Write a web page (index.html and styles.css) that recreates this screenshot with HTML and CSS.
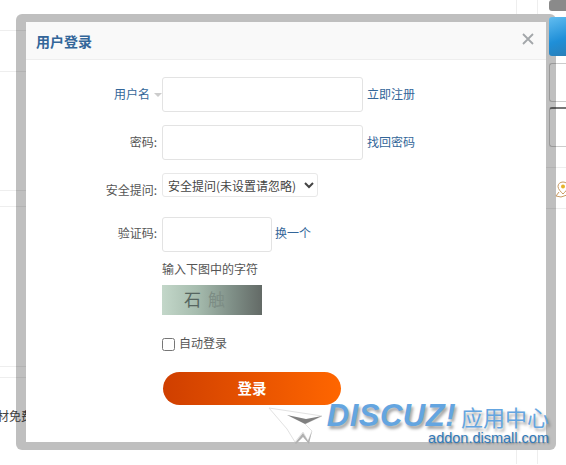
FILE: index.html
```html
<!DOCTYPE html>
<html lang="zh-CN">

<head>
    <meta charset="utf-8">
    <meta name="viewport" content="width=device-width, initial-scale=1.0">
    <title>用户登录</title>
    <link rel="stylesheet" href="styles.css">
</head>

<body>
    <!--页面背景-->
    <div class="backdrop">
        <i class="line l1"></i>
        <i class="line l2"></i>
        <i class="line l3"></i>
        <i class="line l4"></i>
        <i class="line l5"></i>
        <i class="line l6"></i>
        <i class="line-r r1"></i>
        <i class="line-r r2"></i>
        <i class="vline v1"></i>
        <i class="vline v2"></i>
        <i class="vline v3"></i>
        <i class="vline v4"></i>
        <span class="cut-text">材免费</span>
        <div class="side-top"></div>
        <div class="side-blue"></div>
        <div class="side-box b1"></div>
        <div class="side-box b2"></div>
        <svg class="side-pin" width="14" height="20" viewBox="0 0 14 20">
            <path d="M8 2c-3 0-5 2-5 4.500 0 2.500 3 5.500 5 7.500 2-2 5-5 5-7.500C13 4 11 2 8 2z" fill="#fff" stroke="#c99a62" stroke-width="1" />
            <circle cx="8" cy="6.500" r="2" fill="#e5b32c" />
            <path d="M4 12l-3 4 5 1 6-2" fill="none" stroke="#c99a62" stroke-width="1" />
        </svg>
    </div>

    <!--登录窗口-->
    <div class="dialog">
        <div class="dialog-head">
            <h3>用户登录</h3>
            <svg class="close" width="12" height="12" viewBox="0 0 12 12">
                <path d="M1 1l10 10M11 1L1 11" stroke="#a3a7aa" stroke-width="1.800" fill="none" />
            </svg>
        </div>

        <form class="login">
            <div class="row">
                <label class="name-label">用户名<b class="caret"></b></label>
                <input class="txt" type="text">
                <a href="#">立即注册</a>
            </div>
            <div class="row">
                <label>密码:</label>
                <input class="txt" type="password">
                <a href="#">找回密码</a>
            </div>
            <div class="row row-select">
                <label>安全提问:</label>
                <select class="question">
                    <option>安全提问(未设置请忽略)</option>
                </select>
            </div>
            <div class="row row-code">
                <label>验证码:</label>
                <input class="txt short" type="text">
                <a href="#">换一个</a>
            </div>
            <div class="code-box">
                <p>输入下图中的字符</p>
                <div class="code-img"><span>石</span><span class="pale">触</span></div>
                <label class="auto"><input type="checkbox"><span>自动登录</span></label>
                <button class="submit" type="button">登录</button>
            </div>
        </form>
    </div>

    <!--水印-->
    <div class="mark">
        <svg class="mark-arrow" width="56" height="40" viewBox="0 0 56 40">
            <path d="M1 1l53 8-17 8 7 7-4 10-5-9-8 10-8-13z" fill="#fff" stroke="#e2e2e2" stroke-width="1" />
            <path d="M19 8l18 9 17-8-16 3z" fill="#808080" />
            <path d="M27 36l8-10 5 8 4-10-3 13-6-7-7 7z" fill="#b0b0b0" />
        </svg>
        <div class="mark-top"><span class="mark-logo">DISCUZ!</span><span class="mark-cn">应用中心</span></div>
        <div class="mark-url">addon.dismall.com</div>
    </div>
</body>

</html>
```

FILE: styles.css
```css
body {
    margin: 0;
    width: 566px;
    height: 465px;
    overflow: hidden;
    background-color: white;
    font-family: "Noto Sans CJK SC", "Liberation Sans", sans-serif;
    font-size: 12px;
    color: #555;
}

/* BACKDROP */

.backdrop .line {
    position: absolute;
    left: 0;
    width: 26px;
    height: 1px;
    background-color: #eee;
}

.l1 { top: 30px; }
.l2 { top: 71px; }
.l3 { top: 190px; }
.l4 { top: 206px; }
.l5 { top: 366px; }
.l6 { top: 377px; }

.line-r {
    position: absolute;
    left: 546px;
    width: 20px;
    height: 1px;
    background-color: #eee;
}

.r1 { top: 167px; }
.r2 { top: 208px; }

.vline {
    position: absolute;
    width: 1px;
    height: 14px;
    background-color: #eee;
}

.v1 { left: 516px; top: 0; }
.v2 { left: 537px; top: 0; }
.v3 { left: 516px; top: 450px; }
.v4 { left: 537px; top: 450px; }

.cut-text {
    position: absolute;
    left: -3px;
    top: 407px;
    width: 30px;
    overflow: hidden;
    white-space: nowrap;
    color: #444;
}

.side-top {
    position: absolute;
    left: 549px;
    top: 0;
    width: 17px;
    height: 11px;
    background-color: #8a8a8a;
    border-radius: 3px 0 0 3px;
}

.side-blue {
    position: absolute;
    z-index: 1;
    left: 549px;
    top: 17px;
    width: 17px;
    height: 39px;
    border-radius: 3px 0 0 3px;
    background: linear-gradient(160deg, #62bdf0, #1f8fd8 60%, #2a7fb8);
}

.side-box {
    position: absolute;
    left: 549px;
    width: 17px;
    border: 1px solid #ccc;
    border-right: none;
    border-radius: 3px 0 0 3px;
    background-color: white;
}

.b1 { top: 63px; height: 37px; }
.b2 { top: 107px; height: 37px; border-top: 2px solid #777; }

.side-pin {
    position: absolute;
    left: 555px;
    top: 180px;
}

/* DIALOG */

.dialog {
    position: absolute;
    left: 16px;
    top: 14px;
    width: 520px;
    height: 420px;
    border-style: solid;
    border-color: rgba(0, 0, 0, .25);
    border-width: 8px 10px;
    border-radius: 6px;
    background-color: white;
    background-clip: padding-box;
}

.dialog-head {
    height: 34px;
    display: flex;
    align-items: center;
    justify-content: space-between;
    padding: 0 12px 3px 10px;
    background-color: #f9f9f9;
    border-bottom: 1px solid #eee;
}

h3 {
    margin: 0;
    padding-top: 3px;
    font-size: 14px;
    font-weight: bold;
    color: #336699;
}

/* FORM */

.login {
    padding: 17px 0 0 136px;
}

.row {
    display: flex;
    align-items: center;
    height: 35px;
    margin-bottom: 13px;
}

.row label {
    width: 60px;
    margin-left: -60px;
    margin-right: 0;
    padding-right: 5px;
    padding-bottom: 3px;
    box-sizing: border-box;
    text-align: right;
    white-space: nowrap;
}

.row .name-label {
    color: #336699;
    padding-right: 0;
}

.caret {
    display: inline-block;
    margin-left: 4px;
    margin-right: 0;
    vertical-align: 2px;
    border-style: solid;
    border-width: 4px 4px 0;
    border-color: #ccc transparent transparent;
}

.row a {
    margin-left: 4px;
    padding-bottom: 3px;
}

a {
    color: #336699;
    text-decoration: none;
}

.txt {
    box-sizing: border-box;
    width: 201px;
    height: 35px;
    padding: 0 6px;
    border: 1px solid #e3e3e3;
    border-radius: 3px;
    background-color: white;
    outline: none;
}

.txt.short {
    width: 110px;
}

.row-select {
    height: 24px;
    margin-bottom: 19px;
}

.row-select label {
    position: relative;
    top: 4px;
    padding-bottom: 0;
}

.question {
    width: 156px;
    height: 24px;
    padding: 0 0 0 1px;
    border: 1px solid #e8e8e8;
    border-radius: 3px;
    background-color: white;
    color: #444;
    font-family: inherit;
    font-size: 12px;
}

.row-code {
    height: 36px;
    margin-bottom: 0;
}

.row-code label,
.row-code a {
    padding-bottom: 4px;
}

.row-code a {
    margin-left: 3px;
}

.code-box {
    display: flex;
    flex-direction: column;
    align-items: flex-start;
}

.code-box p {
    margin: 8px 0 0;
    height: 24px;
    line-height: 18px;
}

.code-img {
    width: 100px;
    height: 30px;
    display: flex;
    align-items: center;
    margin-top: 1px;
    padding: 0 0 3px 22px;
    gap: 7px;
    box-sizing: border-box;
    background: linear-gradient(90deg, #c3d7c9, #a6bcae 35%, #7f8f87 70%, #636a66);
    color: #566660;
    font-size: 17px;
}

.code-img .pale {
    color: #7d8d85;
}

.auto {
    display: flex;
    align-items: center;
    margin-top: 19px;
    line-height: 18px;
}

.auto input {
    width: 13px;
    height: 13px;
    margin: 0 4px 0 0;
}

.auto span {
    padding-bottom: 2px;
}

.submit {
    width: 178px;
    height: 33px;
    margin: 18px 0 0 1px;
    padding: 0 0 3px;
    border: none;
    border-radius: 17px;
    background: linear-gradient(90deg, #cf3f00, #ff6600);
    color: white;
    font-family: inherit;
    font-size: 14.500px;
    font-weight: bold;
    cursor: pointer;
}

/* WATERMARK */

.mark {
    position: absolute;
    z-index: 2;
    left: 270px;
    top: 403px;
    width: 279px;
    height: 48px;
}

.mark-arrow {
    position: absolute;
    left: -2px;
    top: 4px;
}

.mark-top {
    position: absolute;
    right: 0;
    top: 0;
    display: flex;
    align-items: baseline;
    white-space: nowrap;
    color: #64a5e0;
    line-height: 26px;
    height: 26px;
    text-shadow: 2px 3px 3px rgba(0, 0, 0, .35);
}

.mark-logo {
    font-family: "Liberation Sans", sans-serif;
    font-size: 31px;
    font-weight: bold;
    font-style: italic;
    letter-spacing: .5px;
}

.mark-cn {
    font-size: 22px;
    margin-left: 5px;
}

.mark-url {
    position: absolute;
    right: 0;
    top: 27px;
    font-family: "Liberation Sans", sans-serif;
    font-size: 14.500px;
    line-height: 17px;
    color: #2f79ba;
    text-shadow: 1px 1px 2px rgba(0, 0, 0, .35);
}
```
